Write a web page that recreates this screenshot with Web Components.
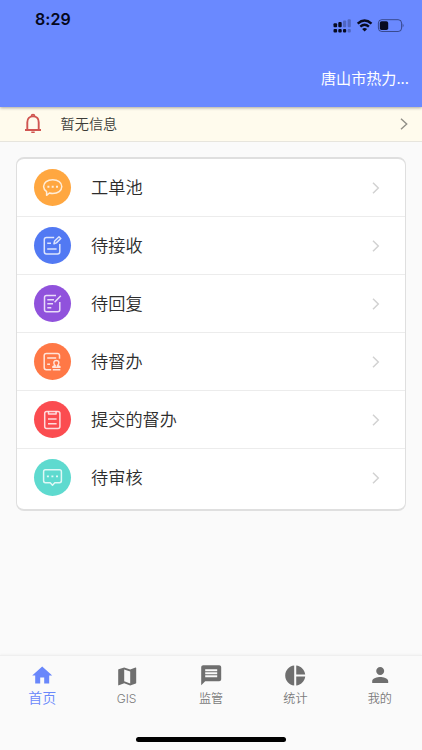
<!DOCTYPE html>
<html lang="zh-CN">
<head>
<meta charset="utf-8">
<title>首页</title>
<style>
html,body{margin:0;height:100%}
body{font-family:"Inter","Noto Sans CJK SC",sans-serif;background:#fafafa;overflow:hidden}
</style>
</head>
<body>
<home-screen></home-screen>
<script>
const define = (name, html) => customElements.define(name, class extends HTMLElement {
  constructor() {
    super();
    this.attachShadow({mode: 'open'}).innerHTML = typeof html === 'function' ? html(this) : html;
  }
});

define('status-bar', `
<style>
:host{display:flex;justify-content:space-between;align-items:flex-start;height:54px;padding:0 18px 0 35px;box-sizing:border-box;color:#05081c}
time{font:600 16px/20px Inter,sans-serif;margin-top:9px;letter-spacing:.05px}
svg{display:block;margin-top:16px}
</style>
<time>8:29</time>
<svg width="72" height="20" viewBox="332 16 72 20" fill="#080b20">
<g><rect x="333.5" y="23.3" width="3.6" height="4" rx="1"/><rect x="338.3" y="22" width="3.4" height="5.3" rx="1"/>
<g opacity=".27"><rect x="343" y="20.5" width="3.2" height="6.8" rx="1"/><rect x="347.6" y="19.3" width="3.2" height="8" rx="1"/><rect x="347.6" y="29" width="3.2" height="3.4" rx="1"/></g>
<rect x="333.5" y="29" width="3.6" height="3.4" rx="1"/><rect x="338.3" y="29" width="3.4" height="3.4" rx="1"/><rect x="343" y="29" width="3.2" height="3.4" rx="1"/></g>
<g fill="none" stroke="#080b20" stroke-width="2.4"><path d="M357.7 23.6Q364.6 17.4 371.5 23.6"/><path d="M360.3 26.7Q364.6 23 368.9 26.7"/></g>
<path d="M362.1 28.9Q364.6 27 367.1 28.9L364.6 31.5Z"/>
<rect x="378.4" y="19.7" width="23.2" height="11.8" rx="3.4" fill="none" stroke="#080b20" stroke-opacity=".5"/>
<path d="M402.7 23.6Q404.4 25.6 402.7 27.6Z" opacity=".5"/>
<rect x="379.8" y="21.2" width="8.4" height="8.8" rx="1.8"/>
</svg>`);

define('app-header', `
<style>
:host{display:block;height:107px;box-sizing:border-box;background:#6a89ff;position:relative;z-index:1;box-shadow:0 1px 3px #0005}
.org{display:flex;justify-content:flex-end;padding:11px 13px 0 0;font:400 15.1px/24px "Noto Sans CJK SC",sans-serif;color:#fff}
</style>
<status-bar></status-bar>
<div class="org"><slot></slot></div>`);

define('notice-bar', `
<style>
:host{display:flex;align-items:center;height:35px;box-sizing:border-box;background:#fffbed;border-bottom:1px solid #e7e5dd;padding:0 13px 0 24px;font:350 14.2px/20px "Noto Sans CJK SC",sans-serif;color:#3c3b38}
span{flex:1;margin-left:18.5px;padding-bottom:2px}
svg{display:block}
</style>
<svg width="18" height="22" viewBox="0 0 18 22" fill="none" stroke="#d05551" stroke-width="1.9"><path d="M1 17H17M3.3 17V9.3C3.3 5.5 5.5 3.4 9 3.4S14.7 5.5 14.7 9.3V17"/><path d="M7.4 3.1Q7.5 1.6 9 1.6T10.6 3.1M7.3 19.3H10.7" stroke-width="1.6"/></svg>
<span><slot></slot></span>
<svg width="10" height="14" viewBox="0 0 10 14" fill="none" stroke="#918f87" stroke-width="1.4"><path d="M2 1.8L7.7 7L2 12.2"/></svg>`);

const glyphs = {
  chat: '<path d="M12.6 26.3V22.7C10.6 21.2 9.6 19.6 9.6 17.6C9.6 13.6 13.5 10.7 18.7 10.7S27.8 13.6 27.8 17.6S23.9 24.5 18.7 24.5C17.5 24.5 16.4 24.3 15.4 24Z"/><path d="M13.4 17.8h2M17.7 17.8h2M22 17.8h2" stroke-width="2"/>',
  edit: '<path d="M20.2 10.5H12.5Q10.3 10.5 10.3 12.7V24.8Q10.3 27 12.5 27H23.6Q25.8 27 25.8 24.8V17M13.2 16.2H17M13.2 22.1H22.6M20 16.7L20.6 14L25 9.8L26.8 11.5L22.4 15.9Z"/>',
  write: '<path d="M22 10.5H12.5Q10.5 10.5 10.5 12.5V24.8Q10.5 26.8 12.5 26.8H23.6Q25.8 26.8 25.8 24.8V17M13.3 14.8H20M13.3 18.8H19M13.3 22.7H17.3M20.6 17.3L26.8 10.8"/>',
  stamp: '<path d="M17.2 26.8H12.4Q10.2 26.8 10.2 24.6V12.6Q10.2 10.4 12.4 10.4H23.3Q25.5 10.4 25.5 12.6V15.8M13.2 15.1H22.2M13.2 21.3H16M18.8 24.3Q18.8 22.8 21.3 22.7Q19.4 21 19.9 19Q20.4 17.4 22.3 17.4Q24.3 17.4 24.8 19Q25.2 21 23.4 22.7Q26 22.8 26 24.3ZM18.8 26.8H26.3"/>',
  clip: '<rect x="10.7" y="10.5" width="15.2" height="17" rx="2"/><path d="M14.5 10.6V13.1H22.1V10.6M14 18H22.6M14 22.8H22.6"/>',
  talk: '<path d="M11.4 10.8H25.5Q27.4 10.8 27.4 12.7V21.8Q27.4 23.7 25.5 23.7H20.8L18.5 26.2L16.2 23.7H11.4Q9.6 23.7 9.6 21.8V12.7Q9.6 10.8 11.4 10.8Z"/><path d="M12.9 17.4h2M17.4 17.4h2M22 17.4h2" stroke-width="1.9"/>'
};
define('menu-row', el => `
<style>
:host{display:flex;align-items:center;height:58px;box-sizing:border-box;border-bottom:1px solid #ececec;padding:0 25px 0 17px;font:350 17.2px/26px "Noto Sans CJK SC",sans-serif;color:#2d2d2d}
:host(:last-child){border-bottom-color:transparent}
i{width:37px;height:37px;border-radius:50%;background:${el.getAttribute('color')}}
svg{display:block;overflow:visible}
span{flex:1;margin-left:20px;padding-bottom:2px}
</style>
<i><svg width="37" height="37" viewBox="0 0 37 37" fill="none" stroke="#fff" stroke-opacity=".8" stroke-width="1.5" stroke-linejoin="round">${glyphs[el.getAttribute('icon')]}</svg></i>
<span><slot></slot></span>
<svg width="8" height="14" viewBox="0 0 8 14" fill="none" stroke="#d2d2d2" stroke-width="1.5"><path d="M1 1.7L6.3 7L1 12.3"/></svg>`);

define('menu-card', `
<style>:host{display:block;margin:15px 16px 0;height:354px;box-sizing:border-box;background:#fff;border:2px solid #dfdfdf;border-width:2px 1.5px;border-radius:8px}</style>
<slot></slot>`);

const tabs = {
  home: '<path d="M10 20v-6h4v6h5v-8h3L12 3 2 12h3v8z"/>',
  map: '<path d="M20.5 3l-.16.03L15 5.1 9 3 3.36 4.9c-.21.07-.36.25-.36.48V20.5c0 .28.22.5.5.5l.16-.03L9 18.9l6 2.1 5.64-1.9c.21-.07.36-.25.36-.48V3.5c0-.28-.22-.5-.5-.5zM15 19l-6-2.11V5l6 2.11V19z"/>',
  message: '<path d="M20 2H4c-1.1 0-1.99.9-1.99 2L2 22l4-4h14c1.1 0 2-.9 2-2V4c0-1.1-.9-2-2-2zm-2 12H6v-2h12v2zm0-3H6V9h12v2zm0-3H6V6h12v2z"/>',
  pie: '<path d="M11 2v20c-5.07-.5-9-4.79-9-10s3.93-9.5 9-10zm2.03 0v8.99H22c-.47-4.74-4.24-8.52-8.97-8.99zm0 11.01V22c4.74-.47 8.5-4.25 8.97-8.99h-8.97z"/>',
  person: '<path d="M12 12c2.21 0 4-1.79 4-4s-1.79-4-4-4-4 1.79-4 4 1.79 4 4 4zm0 2c-2.67 0-8 1.34-8 4v2h16v-2c0-2.66-5.33-4-8-4z"/>'
};
define('tab-item', el => `
<style>
:host{flex:1;display:flex;flex-direction:column;align-items:center;padding-top:8px;color:#6f6f6f;font:350 12.1px/18px Inter,"Noto Sans CJK SC",sans-serif}
:host([active]){color:#6987fb;font-size:14px;font-weight:350}
svg{display:block;flex:none;overflow:visible}
span{margin-top:2px;color:#7b7b7b}
:host([active]) span{margin-top:1px;color:inherit}
</style>
<svg width="24" height="24" viewBox="-.2 ${({home:.6,map:-.4,message:.7,pie:.6,person:.9})[el.getAttribute('icon')]} 24 24" fill="currentColor">${tabs[el.getAttribute('icon')]}</svg>
<span><slot></slot></span>`);

define('tab-bar', `
<style>
:host{display:flex;flex-direction:column;height:95px;box-sizing:border-box;background:#fafafa;border-top:1px solid #efefef;box-shadow:0 -1px 2px #00000008}
nav{display:flex;flex:1}
.grip{width:150px;height:5px;border-radius:3px;background:#000;margin:0 auto 8.5px}
</style>
<nav><slot></slot></nav><div class="grip"></div>`);

define('home-screen', `
<style>
:host{display:flex;flex-direction:column;height:750px;background:#fafafa}
main{flex:1}
</style>
<app-header>唐山市热力...</app-header>
<notice-bar>暂无信息</notice-bar>
<main><menu-card>
<menu-row icon="chat" color="#ffa740">工单池</menu-row>
<menu-row icon="edit" color="#5279f3">待接收</menu-row>
<menu-row icon="write" color="#9052dc">待回复</menu-row>
<menu-row icon="stamp" color="#ff7846">待督办</menu-row>
<menu-row icon="clip" color="#fb4c50">提交的督办</menu-row>
<menu-row icon="talk" color="#5edacf">待审核</menu-row>
</menu-card></main>
<tab-bar>
<tab-item icon="home" active>首页</tab-item>
<tab-item icon="map">GIS</tab-item>
<tab-item icon="message">监管</tab-item>
<tab-item icon="pie">统计</tab-item>
<tab-item icon="person">我的</tab-item>
</tab-bar>`);
</script>
</body>
</html>
